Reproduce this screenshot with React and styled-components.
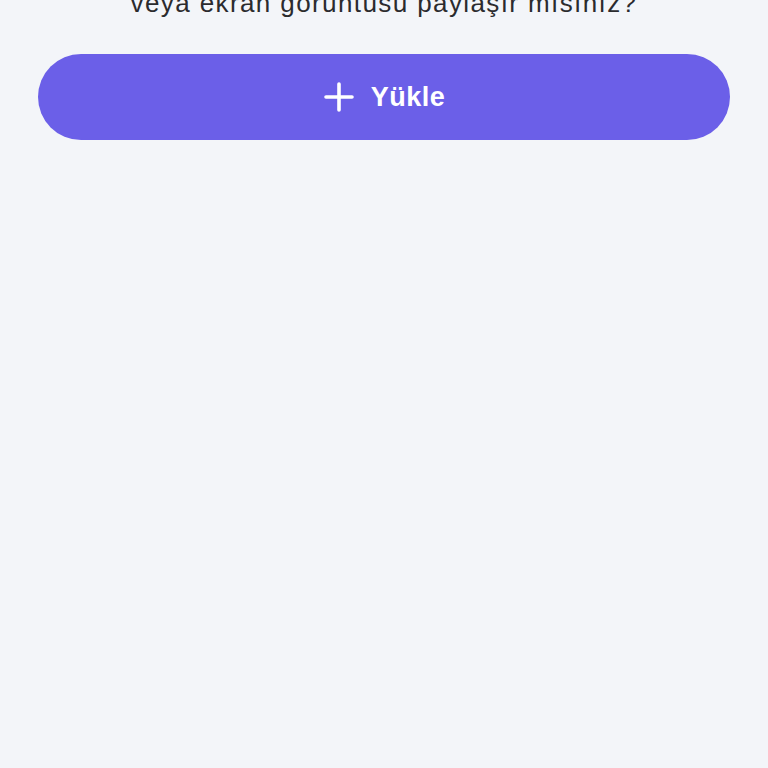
import React from 'react';
import styled, { createGlobalStyle } from 'styled-components';

const Global = createGlobalStyle`
  html, body {
    margin: 0;
    padding: 0;
    background: #f3f5f9;
  }
  body {
    font-family: "Liberation Sans", Arial, sans-serif;
    overflow: hidden;
  }
`

const Page = styled.div`
  min-height: 768px;
  display: flex;
  flex-direction: column;
  padding: 0 38px;
  box-sizing: border-box;
`

const Question = styled.p`
  margin: -14px 0 0;
  font-size: 26px;
  line-height: 34px;
  letter-spacing: 1.4px;
  color: #2b2b2e;
  text-align: center;
  font-weight: 400;
`

const UploadButton = styled.button`
  margin-top: 34px;
  height: 86px;
  width: 100%;
  border: none;
  border-radius: 43px;
  background: #6b5fe8;
  color: #ffffff;
  display: flex;
  align-items: center;
  justify-content: center;
  gap: 16px;
  font-family: "Liberation Sans", Arial, sans-serif;
  font-size: 27px;
  font-weight: 700;
  letter-spacing: 0.5px;
  cursor: pointer;
`

const PlusIcon = () => (
  <svg width="32" height="32" viewBox="0 0 32 32" fill="none">
    <path d="M16 3v26M3 16h26" stroke="#fff" strokeWidth="3.6" strokeLinecap="round" />
  </svg>
)

export default function App() {
  return (
    <Page>
      <Global />
      <Question>veya ekran görüntüsü paylaşır mısınız?</Question>
      <UploadButton>
        <PlusIcon />
        Yükle
      </UploadButton>
    </Page>
  );
}
